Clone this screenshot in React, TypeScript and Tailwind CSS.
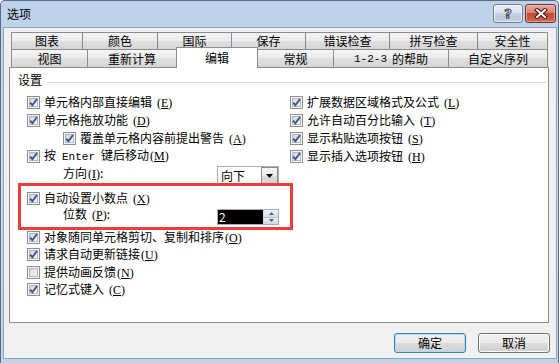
import React from "react";

function Mn({ k, gap = false }: { k: string; gap?: boolean }) {
  return (
    <span className={gap ? "font-['Liberation_Serif',serif] text-[12px] ml-[5px]" : "font-['Liberation_Serif',serif] text-[12px] ml-[1px]"}>
      (<span className="underline underline-offset-[1px]">{k}</span>)
    </span>
  );
}

function Box({ checked = true }: { checked?: boolean }) {
  return (
    <span className="relative w-[13px] h-[13px] shrink-0 border border-[#8f8f8f] bg-[#f6f6f6] flex items-center justify-center">
      <span className="w-[9px] h-[9px] border border-[#b3b7bc] bg-linear-to-br from-[#d3d6d9] to-[#f7f7f7]" />
      {checked && (
        <svg className="absolute left-0 top-0" width="11" height="11" viewBox="0 0 11 11">
          <path d="M2.2 5.6 L4.4 8.2 L9 2" fill="none" stroke="#3a5596" strokeWidth="1.9" />
        </svg>
      )}
    </span>
  );
}

function Check({
  children,
  checked = true,
  h = "h-[18px]",
}: {
  children: React.ReactNode;
  checked?: boolean;
  h?: string;
}) {
  return (
    <div className={"flex items-center " + h}>
      <Box checked={checked} />
      <span className="ml-[4px] leading-[16px] whitespace-nowrap">{children}</span>
    </div>
  );
}

const TAB =
  "h-full border-t border-r border-[#898c95] bg-[linear-gradient(#f4f4f4,#ececec_50%,#e0e0e0_50%,#d5d5d5)] flex items-center justify-center leading-[14px] whitespace-nowrap";

export default function App() {
  return (
    <div className="w-[560px] h-[363px] bg-white overflow-hidden font-['Noto_Sans_CJK_SC',sans-serif] text-[12px] text-black">
      <div className="w-[559px] h-[363px] border-x border-t border-[#5a6b84] rounded-t-[5px] bg-linear-to-b from-[#bdd2ea] via-[#c9daee] to-[#bfd3ea] pl-[2px] pr-[1px] flex flex-col">
        {/* title bar */}
        <div className="h-[26px] flex items-start justify-between shrink-0">
          <span className="mt-[5px] ml-[4px] leading-[16px] text-[12px]">选项</span>
          <div className="flex gap-[2px] mt-[3px] mr-[1px]">
            <div className="w-[30px] h-[19px] rounded-[3px] border border-[#6f7f96] bg-[linear-gradient(#eef2f7,#d8e1ec_45%,#c3d1e2_50%,#bccbde)] shadow-[inset_0_0_0_1px_rgba(255,255,255,0.6)] flex items-center justify-center">
              <span className="font-['DejaVu_Sans',sans-serif] font-bold text-[13px] leading-[13px] text-[#e9edf2] [-webkit-text-stroke:1px_#3b4250]">?</span>
            </div>
            <div className="w-[31px] h-[19px] rounded-[3px] border border-[#6e3128] bg-[linear-gradient(#e8a99b,#d98170_45%,#c4452f_50%,#d06a55)] shadow-[inset_0_0_0_1px_rgba(255,210,200,0.5)] flex items-center justify-center">
              <svg width="14" height="11" viewBox="0 0 14 11">
                <path d="M3 2 L11 9 M11 2 L3 9" stroke="#3d1510" strokeWidth="4" strokeLinecap="square" />
                <path d="M3 2 L11 9 M11 2 L3 9" stroke="#ffffff" strokeWidth="2" strokeLinecap="square" />
              </svg>
            </div>
          </div>
        </div>

        {/* client */}
        <div className="h-[332px] border border-[#8fa3bd] bg-[#f0f0f0] flex flex-col pt-[4px] shrink-0">
          {/* tab row 1 */}
          <div className="ml-[7px] flex h-[17px]">
            <div className={TAB + " w-[72px] border-l"}>图表</div>
            <div className={TAB + " w-[75px]"}>颜色</div>
            <div className={TAB + " w-[74px]"}>国际</div>
            <div className={TAB + " w-[74px]"}>保存</div>
            <div className={TAB + " w-[84px]"}>错误检查</div>
            <div className={TAB + " w-[88px]"}>拼写检查</div>
            <div className={TAB + " w-[70px]"}>安全性</div>
          </div>
          {/* tab row 2 */}
          <div className="ml-[7px] flex items-start h-[18px] relative z-10">
            <div className={TAB + " w-[77px] border-l"}>视图</div>
            <div className={TAB + " w-[89px]"}>重新计算</div>
            <div className="w-[82px] h-[21px] -mt-[2px] -ml-[1px] border-t border-x border-[#898c95] bg-white flex items-center justify-center leading-[14px] pb-[1px]">
              编辑
            </div>
            <div className={TAB + " w-[76px]"}>常规</div>
            <div className={TAB + " w-[115px]"}>
              <span className="font-['Liberation_Mono',monospace] text-[11px] mr-[5px]">1-2-3</span>的帮助
            </div>
            <div className={TAB + " w-[99px]"}>自定义序列</div>
          </div>

          {/* panel */}
          <div className="ml-[5px] w-[540px] h-[256px] border border-[#898c95] bg-white relative shrink-0">
            <div className="flex items-center mt-[4px] h-[16px] pl-[8px] pr-[2px]">
              <span className="leading-[16px]">设置</span>
              <div className="flex-1 h-px bg-[#d5dfe5] ml-[5px] mt-[4px]" />
            </div>

            <div className="flex mt-[5px]">
              {/* left column */}
              <div className="pl-[17px] w-[280px] flex flex-col">
                <Check>
                  单元格内部直接编辑<Mn k="E" gap />
                </Check>
                <Check>
                  单元格拖放功能<Mn k="D" gap />
                </Check>
                <div className="pl-[36px]">
                  <Check>
                    覆盖单元格内容前提出警告<Mn k="A" gap />
                  </Check>
                </div>
                <Check>
                  按<span className="font-['Liberation_Mono',monospace] text-[11px] mx-[6px]">Enter</span>键后移动<Mn k="M" />
                </Check>
                <div className="h-[20px] flex items-start pl-[36px]">
                  <span className="w-[154px] leading-[16px] whitespace-nowrap">
                    方向<Mn k="I" />:
                  </span>
                  <div className="mt-[1px] w-[62px] h-[19px] border border-[#a9afb7] bg-white flex">
                    <span className="flex-1 leading-[17px] pl-[3px]">向下</span>
                    <div className="w-[17px] h-full border border-[#8b8b8b] bg-[linear-gradient(#f4f4f4,#ebebeb_50%,#dddddd_50%,#d2d2d2)] flex items-center justify-center">
                      <svg width="7" height="4" viewBox="0 0 7 4">
                        <path d="M0 0 H7 L3.5 4 Z" fill="#000" />
                      </svg>
                    </div>
                  </div>
                </div>
                <div className="mt-[4px]">
                  <Check>
                    自动设置小数点<Mn k="X" gap />
                  </Check>
                </div>
                <div className="h-[18px] flex items-start pl-[36px]">
                  <span className="w-[154px] leading-[14px] whitespace-nowrap">
                    位数<Mn k="P" gap />:
                  </span>
                  <div className="mt-[2px] w-[62px] h-[16px] border border-[#a9afb7] bg-white flex">
                    <div className="w-[45px] h-full bg-black text-white leading-[14px] pl-[1px]">2</div>
                    <div className="flex-1 flex flex-col border-l border-[#d0d6de]">
                      <div className="flex-1 border-b border-[#b7c2d0] bg-linear-to-b from-[#f1f5fa] to-[#d4deea] flex items-center justify-center">
                        <svg width="5" height="3" viewBox="0 0 5 3">
                          <path d="M0 3 H5 L2.5 0 Z" fill="#4a5f86" />
                        </svg>
                      </div>
                      <div className="flex-1 bg-linear-to-b from-[#e9eff6] to-[#cfdae7] flex items-center justify-center">
                        <svg width="5" height="3" viewBox="0 0 5 3">
                          <path d="M0 0 H5 L2.5 3 Z" fill="#4a5f86" />
                        </svg>
                      </div>
                    </div>
                  </div>
                </div>
                <div className="mt-[3px]">
                  <Check>
                    对象随同单元格剪切、复制和排序<Mn k="O" />
                  </Check>
                  <Check h="h-[17px]">
                    请求自动更新链接<Mn k="U" />
                  </Check>
                  <Check checked={false}>
                    提供动画反馈<Mn k="N" />
                  </Check>
                  <Check h="h-[17px]">
                    记忆式键入<Mn k="C" gap />
                  </Check>
                </div>
              </div>

              {/* right column */}
              <div className="flex flex-col">
                <Check>
                  扩展数据区域格式及公式<Mn k="L" gap />
                </Check>
                <Check>
                  允许自动百分比输入<Mn k="T" gap />
                </Check>
                <Check>
                  显示粘贴选项按钮<Mn k="S" gap />
                </Check>
                <Check>
                  显示插入选项按钮<Mn k="H" gap />
                </Check>
              </div>
            </div>

            {/* red annotation box */}
            <div className="absolute left-[8px] top-[115px] w-[275px] h-[47px] border-[3px] border-[#ef3b3b] pointer-events-none" />
          </div>

          {/* buttons */}
          <div className="flex justify-end gap-[12px] mt-[10px] pr-[6px]">
            <div className="w-[72px] h-[20px] rounded-[3px] border border-[#3c7fb1] shadow-[inset_0_0_0_1px_#a9dcf6] bg-[linear-gradient(#f2f2f2,#ebebeb_50%,#dddddd_50%,#cfcfcf)] flex items-center justify-center leading-[14px]">
              确定
            </div>
            <div className="w-[72px] h-[20px] rounded-[3px] border border-[#707070] shadow-[inset_0_0_0_1px_#fbfbfb] bg-[linear-gradient(#f2f2f2,#ebebeb_50%,#dddddd_50%,#cfcfcf)] flex items-center justify-center leading-[14px]">
              取消
            </div>
          </div>
        </div>
      </div>
    </div>
  );
}
